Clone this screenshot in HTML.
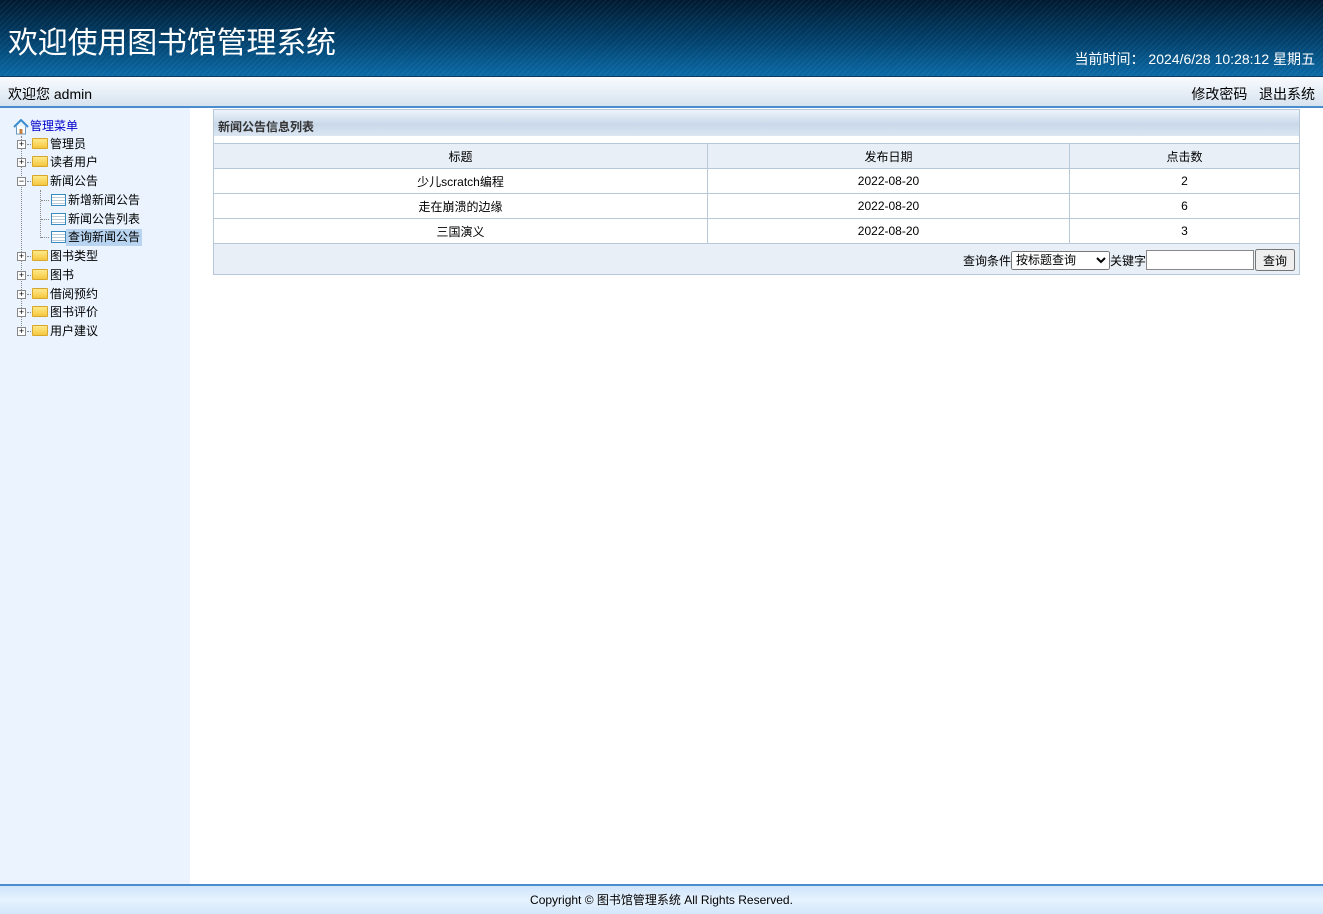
<!DOCTYPE html>
<html><head><meta charset="utf-8"><style>
*{margin:0;padding:0;box-sizing:border-box}
body{width:1323px;height:914px;position:relative;overflow:hidden;font-family:"Liberation Sans","Noto Sans CJK SC",sans-serif;font-size:12px;color:#000;background:#fff}
#hd{position:absolute;left:0;top:0;width:1323px;height:77px;background:repeating-linear-gradient(135deg,rgba(255,255,255,.06) 0 1px,transparent 1px 4px),linear-gradient(#001a30,#02426e 55%,#0a6aa6);border-bottom:1px solid #0d3a5e}
#hd h1{position:absolute;left:8px;top:18px;font-size:30px;font-weight:normal;color:#fff;letter-spacing:-0.2px}
#hd .t{position:absolute;right:8px;top:49px;font-size:14px;color:#fff}
#bar{position:absolute;left:0;top:77px;width:1323px;height:31px;background:linear-gradient(#f8fbfe,#d7e3ef);border-bottom:2px solid #4a8ccc;font-size:14px}
#bar .l{position:absolute;left:8px;top:7px}
#bar .r{position:absolute;right:8px;top:7px}
#sd{position:absolute;left:0;top:108px;width:190px;height:776px;background:#eaf3fe}
.it{position:absolute;height:17px;line-height:17px;white-space:nowrap}
.pm{position:absolute;width:9px;height:9px;border:1px solid #888;background:#fff;font-size:9px;line-height:7px;text-align:center;color:#000}
.fd{position:absolute;width:16px;height:11px;background:linear-gradient(#ffe98a,#f4c640);border:1px solid #d8a628;border-radius:1px}
.pg{position:absolute;width:15px;height:12px;border:1px solid #3a8cc0;background:repeating-linear-gradient(#fff 0 2px,#b9c9d6 2px 3px);}
#ct{position:absolute;left:213px;top:109px;width:1087px;height:166px;border:1px solid #b7c8d8;background:#fff}
#ct .tt{height:26px;background:linear-gradient(#eef4fb,#c9d8ea 55%,#dbe6f2);font-weight:bold;color:#333;padding:8px 0 0 4px;font-size:12px}
table{position:absolute;left:-1px;top:33px;width:1087px;border-collapse:collapse}
td{border:1px solid #b7c8d8;height:25px;text-align:center;font-size:12px}
tr.h td{background:#e8eff7}
#sr{position:absolute;left:0;top:133px;width:1085px;height:31px;background:#e8eff7;border-top:1px solid #b7c8d8}
#ft{position:absolute;left:0;top:884px;width:1323px;height:30px;border-top:2px solid #4a8ccc;background:linear-gradient(#cfe5fb,#e6f2fe 50%,#d3e7fb);text-align:center;padding-top:5px;font-size:12px}
.v{position:absolute;border-left:1px dotted #888}
.hz{position:absolute;border-top:1px dotted #888;width:8px}
</style></head><body>
<div id="hd"><h1>欢迎使用图书馆管理系统</h1><div class="t">当前时间：&nbsp;2024/6/28 10:28:12 星期五</div></div>
<div id="bar"><span class="l">欢迎您 admin</span><span class="r">修改密码&nbsp;&nbsp;&nbsp;退出系统</span></div>
<div id="sd">
<svg style="position:absolute;left:13px;top:11px" width="16" height="16" viewBox="0 0 16 16"><path d="M1 8 L8 1 L15 8" fill="none" stroke="#3a8cd0" stroke-width="2"/><path d="M3.5 7.5 V15 H12.5 V7.5" fill="#fff" stroke="#6a9ac0"/><rect x="6.5" y="10" width="3" height="5" fill="#c08040"/></svg>
<div class="it" style="left:30px;top:10px;color:#0000cc">管理菜单</div>
<div class="v" style="left:21px;top:28px;height:198px"></div>
<div class="v" style="left:40px;top:82px;height:48px"></div>
</div>
<div id="ct"><div class="tt">新闻公告信息列表</div>
<table>
<tr class="h"><td style="width:494px">标题</td><td style="width:362px">发布日期</td><td>点击数</td></tr>
<tr><td>少儿scratch编程</td><td>2022-08-20</td><td>2</td></tr>
<tr><td>走在崩溃的边缘</td><td>2022-08-20</td><td>6</td></tr>
<tr><td>三国演义</td><td>2022-08-20</td><td>3</td></tr>
</table>
<div id="sr"><div style="position:absolute;right:4px;top:5px;display:flex;align-items:center;font-size:12px">查询条件<select style="width:99px;height:19px;font-size:12px;font-family:inherit"><option>按标题查询</option></select>关键字<input style="width:108px;height:20px;border:1px solid #888"><button style="width:40px;height:22px;font-size:12px;font-family:inherit;margin-left:1px">查询</button></div></div>
</div>
<div id="ft">Copyright © 图书馆管理系统 All Rights Reserved.</div>
<div style="position:absolute;left:0;top:0">
<div class="pm" style="left:17px;top:140px">+</div><div class="hz" style="left:27px;top:144px"></div><div class="fd" style="left:32px;top:138px"></div><div class="it" style="left:50px;top:136px">管理员</div>
<div class="pm" style="left:17px;top:158px">+</div><div class="hz" style="left:27px;top:162px"></div><div class="fd" style="left:32px;top:156px"></div><div class="it" style="left:50px;top:154px">读者用户</div>
<div class="pm" style="left:17px;top:177px">−</div><div class="hz" style="left:27px;top:181px"></div><div class="fd" style="left:32px;top:175px"></div><div class="it" style="left:50px;top:173px">新闻公告</div>
<div class="hz" style="left:41px;top:200px"></div><div class="pg" style="left:51px;top:194px"></div><div class="it" style="left:68px;top:192px">新增新闻公告</div>
<div class="hz" style="left:41px;top:219px"></div><div class="pg" style="left:51px;top:213px"></div><div class="it" style="left:68px;top:211px">新闻公告列表</div>
<div class="hz" style="left:41px;top:237px"></div><div class="pg" style="left:51px;top:231px"></div><div class="it" style="left:66px;top:229px;background:#b8d4f0;padding:0 2px">查询新闻公告</div>
<div class="pm" style="left:17px;top:252px">+</div><div class="hz" style="left:27px;top:256px"></div><div class="fd" style="left:32px;top:250px"></div><div class="it" style="left:50px;top:248px">图书类型</div>
<div class="pm" style="left:17px;top:271px">+</div><div class="hz" style="left:27px;top:275px"></div><div class="fd" style="left:32px;top:269px"></div><div class="it" style="left:50px;top:267px">图书</div>
<div class="pm" style="left:17px;top:290px">+</div><div class="hz" style="left:27px;top:294px"></div><div class="fd" style="left:32px;top:288px"></div><div class="it" style="left:50px;top:286px">借阅预约</div>
<div class="pm" style="left:17px;top:308px">+</div><div class="hz" style="left:27px;top:312px"></div><div class="fd" style="left:32px;top:306px"></div><div class="it" style="left:50px;top:304px">图书评价</div>
<div class="pm" style="left:17px;top:327px">+</div><div class="hz" style="left:27px;top:331px"></div><div class="fd" style="left:32px;top:325px"></div><div class="it" style="left:50px;top:323px">用户建议</div>
</div>
</body></html>
